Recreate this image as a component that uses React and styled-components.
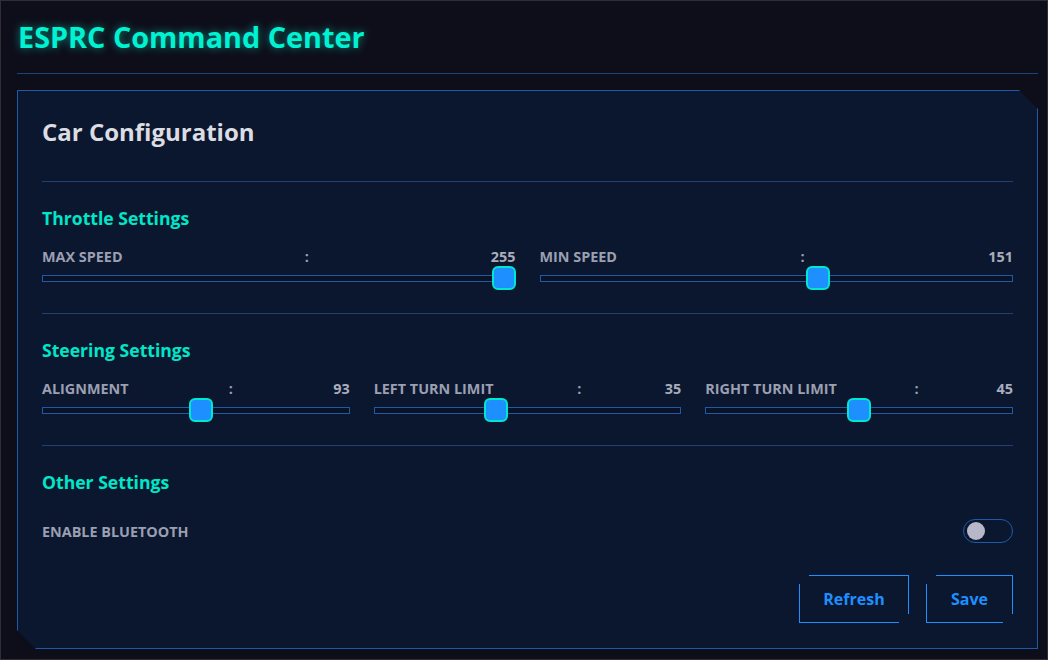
import { useState } from 'react';
import styled, { createGlobalStyle } from 'styled-components';

const GlobalStyle = createGlobalStyle`
  html, body {
    margin: 0;
    padding: 0;
    background: #0e0e1a;
  }
  * {
    box-sizing: border-box;
  }
  body {
    font-family: 'Open Sans', 'Noto Sans', sans-serif;
  }
`;

const Frame = styled.div`
  width: 1048px;
  height: 660px;
  border: 1px solid #2e2e36;
  background: #0e0e1a;
  padding: 0 9px 0 16px;
  overflow: hidden;
`;

const Header = styled.header`
  height: 73px;
  display: flex;
  align-items: center;
  padding-bottom: 2px;
  border-bottom: 1px solid #1c4478;
`;

const Title = styled.h1`
  margin: 0;
  padding-left: 1px;
  font-size: 28.8px;
  font-weight: 700;
  color: #00f2d2;
  text-shadow: 0 0 8px rgba(0, 242, 210, 0.55);
`;

const Panel = styled.section`
  margin-top: 16px;
  height: 559px;
  width: 1021px;
  background: #0b172e;
  border: 1px solid #1e5aa8;
  padding: 24px;
  clip-path: polygon(
    0 0,
    calc(100% - 19px) 0,
    100% 19px,
    100% 100%,
    19px 100%,
    0 calc(100% - 19px)
  );
  display: flex;
  flex-direction: column;
`;

const PanelTitle = styled.h2`
  margin: 0;
  font-size: 24px;
  line-height: 33px;
  font-weight: 700;
  color: #dcdde3;
  padding-bottom: 33px;
  border-bottom: 1px solid #1e4272;
`;

const Section = styled.div`
  padding-top: 24px;
  padding-bottom: ${(p) => (p.$last ? '0' : '23px')};
  border-bottom: ${(p) => (p.$last ? 'none' : '1px solid #1e4272')};
`;

const SectionTitle = styled.h3`
  margin: 0 0 18px;
  font-size: 17.6px;
  line-height: 24px;
  font-weight: 700;
  color: #00e6c8;
`;

const Grid = styled.div`
  display: grid;
  grid-template-columns: repeat(${(p) => p.$cols}, 1fr);
  column-gap: 24px;
`;

const LabelRow = styled.div`
  display: flex;
  justify-content: space-between;
  font-size: 14.4px;
  line-height: 18px;
  font-weight: 700;
  color: #9b9fb2;
`;

const Value = styled.span`
  color: #a9adbd;
`;

const Track = styled.div`
  position: relative;
  height: 24px;
  display: flex;
  align-items: center;
  &::before {
    content: '';
    display: block;
    width: 100%;
    height: 5px;
    border: 1px solid #1e5aa8;
    background: #0a1326;
  }
`;

const Thumb = styled.div`
  position: absolute;
  top: 0;
  width: 24px;
  height: 24px;
  border-radius: 6px;
  background: #1e8fff;
  border: 2px solid #00e8d0;
`;

const ToggleRow = styled.div`
  margin-top: 25px;
  height: 24px;
  display: flex;
  align-items: center;
  justify-content: space-between;
  font-size: 14.4px;
  font-weight: 700;
  color: #9b9fb2;
`;

const Toggle = styled.button`
  width: 50px;
  height: 24px;
  border-radius: 12px;
  border: 1px solid #1e5aa8;
  background: transparent;
  padding: 0 0 0 3px;
  display: flex;
  align-items: center;
  justify-content: ${(p) => (p.$on ? 'flex-end' : 'flex-start')};
  cursor: pointer;
  &::after {
    content: '';
    width: 18px;
    height: 18px;
    border-radius: 50%;
    background: ${(p) => (p.$on ? '#00e6c8' : '#b7b7c9')};
  }
`;

const Actions = styled.div`
  margin-top: 32px;
  display: flex;
  justify-content: flex-end;
  gap: 17px;
`;

const Button = styled.button`
  position: relative;
  height: 48px;
  width: ${(p) => p.$w}px;
  background: transparent;
  border: none;
  font-family: inherit;
  font-size: 16px;
  font-weight: 700;
  color: #1e8fff;
  cursor: pointer;
  &::before {
    content: '';
    position: absolute;
    top: 0;
    left: 10px;
    right: 0;
    bottom: 9px;
    border-top: 1px solid #1e8fff;
    border-right: 1px solid #1e8fff;
  }
  &::after {
    content: '';
    position: absolute;
    top: 9px;
    left: 0;
    right: 10px;
    bottom: 0;
    border-bottom: 1px solid #1e8fff;
    border-left: 1px solid #1e8fff;
  }
`;

function Slider({ label, value, max }) {
  const pct = value / max;
  return (
    <div>
      <LabelRow>
        <span>{label}</span>
        <span>:</span>
        <Value>{value}</Value>
      </LabelRow>
      <Track>
        <Thumb style={{ left: `calc((100% - 24px) * ${pct})` }} />
      </Track>
    </div>
  );
}

export default function App() {
  const [bluetooth, setBluetooth] = useState(false);

  return (
    <>
      <GlobalStyle />
      <Frame>
        <Header>
          <Title>ESPRC Command Center</Title>
        </Header>
        <Panel>
          <PanelTitle>Car Configuration</PanelTitle>
          <Section>
            <SectionTitle>Throttle Settings</SectionTitle>
            <Grid $cols={2}>
              <Slider label="MAX SPEED" value={255} max={255} />
              <Slider label="MIN SPEED" value={151} max={255} />
            </Grid>
          </Section>
          <Section>
            <SectionTitle>Steering Settings</SectionTitle>
            <Grid $cols={3}>
              <Slider label="ALIGNMENT" value={93} max={180} />
              <Slider label="LEFT TURN LIMIT" value={35} max={90} />
              <Slider label="RIGHT TURN LIMIT" value={45} max={90} />
            </Grid>
          </Section>
          <Section $last>
            <SectionTitle>Other Settings</SectionTitle>
            <ToggleRow>
              <span>ENABLE BLUETOOTH</span>
              <Toggle $on={bluetooth} onClick={() => setBluetooth(!bluetooth)} />
            </ToggleRow>
            <Actions>
              <Button $w={110}>Refresh</Button>
              <Button $w={87}>Save</Button>
            </Actions>
          </Section>
        </Panel>
      </Frame>
    </>
  );
}
